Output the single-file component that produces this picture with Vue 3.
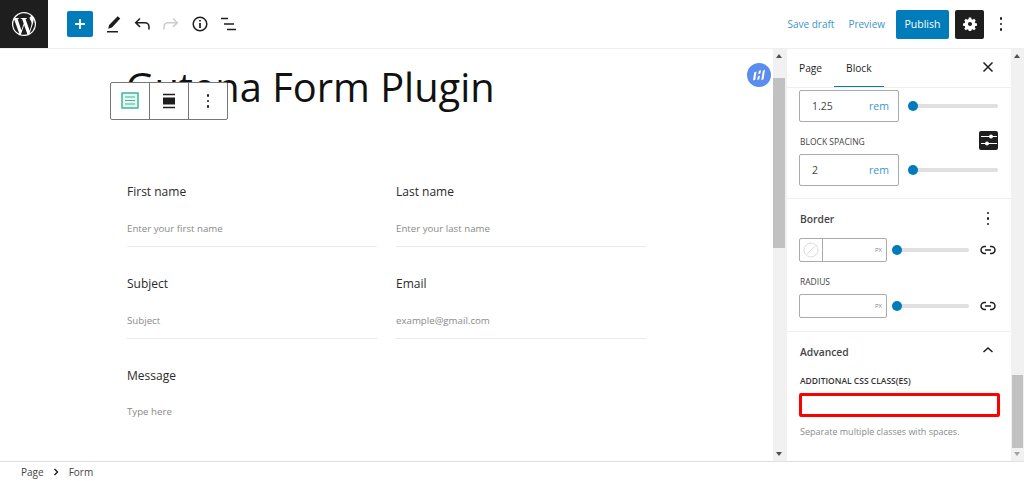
<script setup>
const rows = [
  [{ label: 'First name', hint: 'Enter your first name' }, { label: 'Last name', hint: 'Enter your last name' }],
  [{ label: 'Subject', hint: 'Subject' }, { label: 'Email', hint: 'example@gmail.com' }],
]
</script>

<template>
  <div class="app">
    <header class="top">
      <div class="wp">
        <svg width="24" height="24" viewBox="0 0 24 24"><path fill="#fff" d="M12 0a12 12 0 1 0 0 24 12 12 0 0 0 0-24zM1.200 12c0-1.600.3-3 1-4.400l5.100 14.100A10.800 10.800 0 0 1 1.200 12zM12 22.800c-1.100 0-2.100-.2-3.100-.4l3.200-9.400 3.300 9.200.1.100c-1.100.3-2.300.5-3.500.5zm1.500-15.900c.6 0 1.200-.1 1.200-.1.600-.1.500-.9-.1-.9 0 0-1.700.1-2.800.1-1 0-2.700-.1-2.700-.1-.6 0-.7.900-.1.900 0 0 .5.100 1.100.1l1.600 4.500-2.300 6.900L5.600 6.900c.6 0 1.200-.1 1.200-.1.600-.1.500-.9-.1-.9 0 0-1.700.1-2.800.1h-.7A10.800 10.800 0 0 1 19.500 4.200h-.1c-1 0-1.800.9-1.800 1.900 0 .9.500 1.600 1.100 2.500.4.700.9 1.600.9 3 0 .9-.4 2-.8 3.400l-1.100 3.700zm4 14.500 3.300-9.500c.6-1.500.8-2.700.8-3.800 0-.4 0-.8-.1-1.100a10.800 10.800 0 0 1-4 14.400z"/></svg>
      </div>
      <div class="tools">
        <button class="add">
          <svg width="12" height="12" viewBox="0 0 12 12"><path d="M6 1v10M1 6h10" stroke="#fff" stroke-width="1.800"/></svg>
        </button>
        <svg class="tool" width="24" height="24" viewBox="0 0 24 24"><path fill="#1e1e1e" d="M6 20.500h11V19H6zM16.700 4.300l2.600 2.300-8.300 8.900-3.800 1.300.9-3.700z"/></svg>
        <svg class="tool" width="24" height="24" viewBox="0 0 24 24"><path fill="none" stroke="#1e1e1e" stroke-width="1.500" d="M19 17.500v-2.700c0-2.300-1.800-4.100-4.100-4.100H6M10 6.500l-4.300 4.200 4.300 4.200"/></svg>
        <svg class="tool" width="24" height="24" viewBox="0 0 24 24"><path fill="none" stroke="#ccc" stroke-width="1.500" d="M5 17.500v-2.700c0-2.300 1.800-4.100 4.100-4.100H18M14 6.500l4.300 4.200-4.300 4.200"/></svg>
        <svg class="tool" width="24" height="24" viewBox="0 0 24 24"><circle cx="12" cy="12" r="6.800" fill="none" stroke="#1e1e1e" stroke-width="1.500"/><path d="M12 11v5M12 8v1.600" stroke="#1e1e1e" stroke-width="1.700"/></svg>
        <svg class="tool" width="24" height="24" viewBox="0 0 24 24"><path d="M4 6.500h7M7 12h10M10 17.500h9" stroke="#1e1e1e" stroke-width="1.500"/></svg>
      </div>
      <div class="actions">
        <span class="link">Save draft</span>
        <span class="link preview">Preview</span>
        <button class="publish">Publish</button>
        <button class="gear">
          <svg width="14" height="14" viewBox="0 0 24 24"><path fill="#fff" fill-rule="evenodd" d="M10 1h4l.6 3 1.900.8 2.500-1.700 2.900 2.900-1.700 2.500.8 1.900 3 .6v4l-3 .6-.8 1.900 1.700 2.500-2.900 2.900-2.500-1.700-1.900.8-.6 3h-4l-.6-3-1.900-.8L5 22.900 2.100 20l1.700-2.500-.8-1.900-3-.6v-4l3-.6.8-1.900L2.100 6 5 3.100l2.500 1.700 1.900-.8zM12 8.500a3.500 3.500 0 1 0 0 7 3.500 3.500 0 0 0 0-7z"/></svg>
        </button>
        <span class="more"><i></i><i></i><i></i></span>
      </div>
    </header>

    <div class="body">
      <main class="canvas">
        <h1 class="title">Gutena Form Plugin</h1>
        <div class="blockbar">
          <span class="bb">
            <svg width="18" height="18" viewBox="0 0 18 18"><rect x="1" y="1" width="16" height="15" fill="#e6f6f1" stroke="#3fb79a" stroke-width="1.500"/><path d="M4 5h10M4 8.500h10M4 12h10" stroke="#3fb79a" stroke-width="1"/></svg>
          </span>
          <span class="bb">
            <svg width="14" height="16" viewBox="0 0 14 16"><path d="M1 1.500h12M1 14.500h12" stroke="#1e1e1e" stroke-width="1.500"/><rect x="1" y="4.500" width="12" height="7" fill="#1e1e1e"/></svg>
          </span>
          <span class="bb"><span class="more small"><i></i><i></i><i></i></span></span>
        </div>
        <span class="badge">
          <svg width="14" height="14" viewBox="0 0 14 14"><path fill="#fff" d="M1 12.500 2.200 4.500l2.300-1-1.200 8.300zM5.200 12l.7-3.800 2-.6-.6 3.700zM6.300 6.300l.5-3.300 2.200-1-.6 3.600zM9.300 12.200l1.500-9.200L13 1.500l-1.500 9.800z"/></svg>
        </span>
        <form class="form">
          <div v-for="(row, i) in rows" :key="i" class="row">
            <div v-for="f in row" :key="f.label" class="field">
              <div class="label">{{ f.label }}</div>
              <div class="hint">{{ f.hint }}</div>
            </div>
          </div>
          <div class="message">
            <div class="label">Message</div>
            <div class="hint">Type here</div>
          </div>
        </form>
      </main>

      <div class="scroll first">
        <span class="arrow up"></span>
        <span class="thumb t1"></span>
        <span class="arrow down dark"></span>
      </div>

      <aside class="side">
        <div class="tabs">
          <span class="tab">Page</span>
          <span class="tab on">Block</span>
          <svg class="close" width="14" height="14" viewBox="0 0 14 14"><path d="M2.500 2.500l9 9M11.500 2.500l-9 9" stroke="#1e1e1e" stroke-width="1.500"/></svg>
        </div>

        <section class="panel typo">
          <div class="ctl">
            <div class="num"><span>1.25</span><em>rem</em></div>
            <div class="slide"><b></b></div>
          </div>
          <div class="labelrow">
            <span class="cap">BLOCK SPACING</span>
            <span class="sliders">
              <svg width="16" height="14" viewBox="0 0 16 14"><path d="M0 3.500h16M0 10.500h16" stroke="#fff" stroke-width="1.200"/><circle cx="10" cy="3.500" r="2" fill="#fff"/><circle cx="6" cy="10.500" r="2" fill="#fff"/></svg>
            </span>
          </div>
          <div class="ctl">
            <div class="num"><span>2</span><em>rem</em></div>
            <div class="slide"><b></b></div>
          </div>
        </section>

        <section class="panel border">
          <div class="head">
            <span>Border</span>
            <span class="more small"><i></i><i></i><i></i></span>
          </div>
          <div class="ctl thin">
            <div class="px swatched">
              <span class="swatch"><svg width="16" height="16" viewBox="0 0 16 16"><circle cx="8" cy="8" r="7" fill="none" stroke="#ddd"/><path d="M4 12l8-8" stroke="#ddd"/></svg></span>
              <em>PX</em>
            </div>
            <div class="slide short"><b></b></div>
            <svg class="chain" width="18" height="18" viewBox="0 0 18 18"><path fill="none" stroke="#1e1e1e" stroke-width="1.500" d="M7 5.500H5.500a3.500 3.500 0 0 0 0 7H7M11 5.500h1.500a3.500 3.500 0 0 1 0 7H11M6 9h6"/></svg>
          </div>
          <div class="cap radius">RADIUS</div>
          <div class="ctl thin">
            <div class="px"><em>PX</em></div>
            <div class="slide short"><b></b></div>
            <svg class="chain" width="18" height="18" viewBox="0 0 18 18"><path fill="none" stroke="#1e1e1e" stroke-width="1.500" d="M7 5.500H5.500a3.500 3.500 0 0 0 0 7H7M11 5.500h1.500a3.500 3.500 0 0 1 0 7H11M6 9h6"/></svg>
          </div>
        </section>

        <section class="panel adv">
          <div class="head">
            <span>Advanced</span>
            <svg class="chev" width="14" height="14" viewBox="0 0 14 14"><path d="M2.500 7L7 3l4.500 4" fill="none" stroke="#1e1e1e" stroke-width="1.500"/></svg>
          </div>
          <div class="cap strong">ADDITIONAL CSS CLASS(ES)</div>
          <div class="redbox"></div>
          <p class="help">Separate multiple classes with spaces.</p>
        </section>
      </aside>

      <div class="scroll">
        <span class="arrow up"></span>
        <span class="thumb t2"></span>
        <span class="arrow down"></span>
      </div>
    </div>

    <footer class="foot">
      <span>Page</span>
      <svg width="8" height="8" viewBox="0 0 8 8"><path d="M2.500 1l3 3-3 3" fill="none" stroke="#1e1e1e" stroke-width="1.400"/></svg>
      <span class="crumb">Form</span>
    </footer>
  </div>
</template>

<style>
html, body { margin: 0; background: #fff; }
</style>

<style scoped>
.app {
  width: 1024px;
  height: 481px;
  display: flex;
  flex-direction: column;
  overflow: hidden;
  font-family: "Open Sans", "Noto Sans", sans-serif;
  color: #1e1e1e;
  background: #fff;
}
button { border: 0; padding: 0; font: inherit; }

.top {
  height: 48px;
  flex: none;
  display: flex;
  align-items: center;
  border-bottom: 1px solid #eee;
  box-sizing: content-box;
}
.wp {
  width: 48px;
  height: 48px;
  background: #1e1e1e;
  display: flex;
  align-items: center;
  justify-content: center;
}
.tools {
  display: flex;
  align-items: center;
  margin-left: 19px;
  gap: 5px;
}
.add {
  width: 26px;
  height: 26px;
  background: #007cba;
  border-radius: 2px;
  display: flex;
  align-items: center;
  justify-content: center;
  margin-right: 3px;
}
.tool { flex: none; }
.actions {
  margin-left: auto;
  display: flex;
  align-items: center;
  font-size: 10px;
  padding-right: 6px;
}
.link { color: #3d95c9; }
.preview { margin-left: 14px; }
.publish {
  margin-left: 11px;
  width: 53px;
  height: 29px;
  background: #007cba;
  color: #fff;
  font-size: 10.500px;
  border-radius: 2px;
}
.gear {
  margin-left: 6px;
  width: 29px;
  height: 29px;
  background: #1e1e1e;
  border-radius: 2px;
  display: flex;
  align-items: center;
  justify-content: center;
}
.more { display: inline-flex; flex-direction: column; gap: 3px; align-items: center; width: 34px; }
.more i { width: 2.500px; height: 2.500px; border-radius: 50%; background: #1e1e1e; display: block; }
.more.small { width: auto; }

.body { flex: 1; display: flex; min-height: 0; }
.canvas { flex: 1; position: relative; min-width: 0; padding: 0 0 0 127px; }
.title {
  margin: 12px 0 0 -1.500px;
  font-weight: 400;
  font-size: 39.800px;
  line-height: 52px;
  color: #111;
}
.blockbar {
  position: absolute;
  left: 110px;
  top: 33px;
  height: 36px;
  display: flex;
  background: #fff;
  border: 1px solid #777;
  border-radius: 2px;
}
.bb {
  width: 38px;
  display: flex;
  align-items: center;
  justify-content: center;
  border-left: 1px solid #777;
}
.bb:first-child { border-left: 0; }
.badge {
  position: absolute;
  left: 747px;
  top: 14px;
  width: 24px;
  height: 24px;
  border-radius: 50%;
  background: #5b8def;
  display: flex;
  align-items: center;
  justify-content: center;
}
.form { margin-top: 67px; width: 520px; }
.row { display: flex; gap: 19px; margin-bottom: 25px; }
.field { width: 250px; border-bottom: 1px solid #e7e9f0; padding-top: 3px; height: 63px; }
.label { font-size: 12px; line-height: 18px; color: #2b2b2b; }
.hint { margin-top: 20px; font-size: 9.700px; line-height: 16px; color: #8a8a8a; }
.message { padding-top: 3px; }
.message .hint { margin-top: 19px; }

.scroll {
  width: 13px;
  flex: none;
  background: #f1f1f1;
  position: relative;
}
.scroll.first { width: 14px; }
.arrow {
  position: absolute;
  left: 3px;
  width: 0;
  height: 0;
  border-left: 3px solid transparent;
  border-right: 3px solid transparent;
}
.up { top: 5px; border-bottom: 4px solid #505050; }
.down { bottom: 5px; border-top: 4px solid #a3a3a3; }
.down.dark { border-top-color: #505050; }
.thumb { position: absolute; left: 0; width: 12px; background: #c1c1c1; }
.t1 { top: 29px; height: 170px; }
.t2 { top: 326px; height: 73px; left: 1px; width: 11px; }

.side {
  width: 224px;
  flex: none;
  background: #fff;
  font-size: 10.500px;
  overflow: hidden;
}
.tabs {
  height: 38px;
  display: flex;
  align-items: center;
  padding-left: 12px;
  border-bottom: 1px solid #eee;
  position: relative;
  font-size: 10.200px;
}
.tab { padding: 0 13px 0 0; height: 38px; line-height: 38px; }
.tab.on { position: relative; margin-left: 11px; padding: 0; }
.tab.on::after {
  content: "";
  position: absolute;
  left: -12px;
  right: -12px;
  bottom: 0;
  height: 1.500px;
  background: #007cba;
}
.close { position: absolute; right: 16px; top: 11px; }

.panel { padding: 0 12px; border-bottom: 1px solid #eee; }
.typo { padding-top: 2px; height: 111px; box-sizing: border-box; }
.ctl { display: flex; align-items: center; }
.num {
  width: 77px;
  height: 30px;
  border: 1px solid #aaa;
  border-radius: 2px;
  display: flex;
  align-items: center;
  justify-content: space-between;
  padding: 0 9px 0 12px;
  font-size: 10.500px;
  color: #444;
}
.num em { font-style: normal; color: #3d95c9; }
.slide {
  margin-left: 9px;
  width: 90px;
  height: 4px;
  border-radius: 2px;
  background: #e0e0e0;
  position: relative;
}
.slide b {
  position: absolute;
  left: 0;
  top: -3px;
  width: 10px;
  height: 10px;
  border-radius: 50%;
  background: #007cba;
}
.labelrow {
  display: flex;
  align-items: center;
  justify-content: space-between;
  margin-top: 8px;
  height: 20px;
  margin-bottom: 4px;
}
.labelrow .cap { margin-top: 3px; }
.cap { font-size: 8.500px; color: #444; font-weight: 500; margin-left: 1px; }
.sliders {
  width: 19px;
  height: 19px;
  background: #1e1e1e;
  border-radius: 2px;
  display: flex;
  align-items: center;
  justify-content: center;
  margin-right: 1px;
}
.border { height: 133px; box-sizing: border-box; border-bottom-color: #f0f0f0; }
.head {
  display: flex;
  align-items: center;
  justify-content: space-between;
  height: 39px;
  padding-left: 1px;
  font-size: 10.300px;
  font-weight: 600;
  color: #444;
}
.border .head .more { margin-right: 10px; }
.px {
  width: 82px;
  height: 22px;
  border: 1px solid #aaa;
  border-radius: 2px;
  display: flex;
  align-items: center;
  justify-content: flex-end;
  padding-right: 4px;
}
.px em { font-style: normal; font-size: 6px; color: #888; }
.swatched { justify-content: space-between; }
.swatch {
  width: 22px;
  height: 22px;
  border-right: 1px solid #aaa;
  display: flex;
  align-items: center;
  justify-content: center;
}
.slide.short { width: 77px; margin-left: 5px; }
.chain { margin-left: 10px; flex: none; }
.radius { margin-top: 14px; margin-bottom: 6px; line-height: 12px; }
.adv { border-bottom: 0; }
.adv .head { height: 40px; }
.chev { margin-right: 4px; }
.strong { color: #333; line-height: 12px; margin-top: 3px; font-weight: 600; }
.redbox {
  width: 195px;
  height: 18px;
  border: 3px solid #f00;
  border-radius: 2px;
  margin-top: 6px;
}
.help { margin: 8px 0 0 1px; font-size: 9px; line-height: 14px; color: #8a8a8a; }

.foot {
  height: 19px;
  flex: none;
  border-top: 1px solid #e0e0e0;
  display: flex;
  align-items: center;
  gap: 8px;
  padding-left: 21px;
  font-size: 10px;
  color: #444;
}
.crumb { margin-left: 1px; }
</style>
